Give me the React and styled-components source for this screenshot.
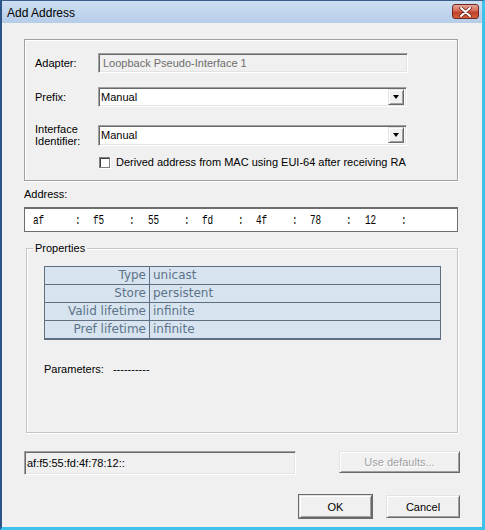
import React from "react";
import styled, { createGlobalStyle } from "styled-components";

const GlobalStyle = createGlobalStyle`
  html, body {
    margin: 0;
    padding: 0;
    background: #f0f0f0;
  }
  body {
    font-family: "Liberation Sans", Arial, sans-serif;
    font-size: 11px;
    color: #000;
  }
`;

const Window = styled.div`
  width: 485px;
  height: 530px;
  box-sizing: border-box;
  display: flex;
  flex-direction: column;
  background: #f0f0f0;
  border-left: 2px solid #2a5586;
  border-right: 3px solid #3fc2ea;
  border-bottom: 3px solid #3fc2ea;
  border-top: 1px solid #3a5f8c;
  overflow: hidden;
`;

const TitleBar = styled.div`
  height: 22px;
  flex: none;
  display: flex;
  align-items: center;
  justify-content: space-between;
  padding: 0 3px 0 5px;
  background: linear-gradient(#cddff2, #b6cde8);
`;

const Title = styled.div`
  font-size: 12px;
  color: #000;
  padding-top: 1px;
`;

const CloseButton = styled.div`
  width: 27px;
  height: 15px;
  box-sizing: border-box;
  border: 1px solid #6e2a22;
  border-radius: 3px;
  background: linear-gradient(#e6a796 0%, #d56a53 45%, #c0412a 55%, #d4603f 100%);
  display: flex;
  align-items: center;
  justify-content: center;
  margin-top: -1px;
`;

const Body = styled.div`
  flex: 1;
  padding: 16px 23px 0 22px;
  display: flex;
  flex-direction: column;
`;

const GroupBox = styled.div`
  width: 434px;
  height: 142px;
  box-sizing: border-box;
  border: 1px solid #a0a0a0;
  box-shadow: 1px 1px 0 #fff, inset 1px 1px 0 #fff;
  padding: 13px 0 0 10px;
  display: flex;
  flex-direction: column;
`;

const FieldRow = styled.div`
  display: grid;
  grid-template-columns: 63px 310px;
  align-items: center;
  margin-top: ${(p) => p.$gap || 0}px;
  height: ${(p) => p.$h || 20}px;
`;

const Label = styled.div`
  line-height: 12px;
`;

const SunkenField = styled.div`
  box-sizing: border-box;
  height: ${(p) => p.$h || 20}px;
  width: ${(p) => p.$w || 310}px;
  background: ${(p) => (p.$disabled ? "#f0f0f0" : "#fff")};
  border-top: 1px solid #a0a0a0;
  border-left: 1px solid #a0a0a0;
  border-right: 1px solid #fff;
  border-bottom: 1px solid #fff;
  box-shadow: inset 1px 1px 0 #696969, inset -1px -1px 0 #e3e3e3;
  display: flex;
  align-items: center;
  padding-left: ${(p) => p.$pad ?? 4}px;
  color: ${(p) => (p.$disabled && !p.$dark ? "#6d6d6d" : "#000")};
`;

const SelectBox = styled(SunkenField)`
  justify-content: space-between;
  padding-right: 2px;
`;

const DropButton = styled.div`
  width: 16px;
  height: 16px;
  box-sizing: border-box;
  background: #f0f0f0;
  border-top: 1px solid #e3e3e3;
  border-left: 1px solid #e3e3e3;
  border-right: 1px solid #696969;
  border-bottom: 1px solid #696969;
  box-shadow: inset 1px 1px 0 #fff, inset -1px -1px 0 #a0a0a0;
  display: flex;
  align-items: center;
  justify-content: center;
`;

const Arrow = styled.div`
  width: 0;
  height: 0;
  border-left: 3.5px solid transparent;
  border-right: 3.5px solid transparent;
  border-top: 4px solid #000;
`;

const CheckRow = styled.label`
  display: flex;
  align-items: center;
  gap: 6px;
  margin: 12px 0 0 64px;
`;

const CheckBox = styled.span`
  width: 11px;
  height: 11px;
  box-sizing: border-box;
  background: #fff;
  border: 1px solid #808080;
  box-shadow: inset 1px 1px 0 #404040, 1px 1px 0 #fff;
`;

const SectionLabel = styled.div`
  margin-top: 7px;
  line-height: 13px;
`;

const AddressField = styled.div`
  margin-top: 6px;
  width: 434px;
  height: 25px;
  box-sizing: border-box;
  background: #fff;
  border: 1px solid #6e6e6e;
  border-top-width: 2px;
  display: grid;
  grid-template-columns: repeat(8, 54.3px);
  align-items: center;
  padding-left: 14px;
  font-family: "Liberation Mono", "DejaVu Sans Mono", monospace;
  font-size: 13px;
`;

const Octet = styled.div`
  display: grid;
  grid-template-columns: 36px 18px;
  span {
    display: inline-block;
    transform: scaleX(0.72);
    transform-origin: left;
  }
  &:first-child span:first-child {
    margin-left: -6px;
  }
`;

const Fieldset = styled.fieldset`
  margin: 10px 0 0 2px;
  width: 432px;
  height: 191px;
  box-sizing: border-box;
  padding: 0;
  border: 1px solid #c4c4c4;
  box-shadow: 1px 1px 0 #fff, inset 1px 1px 0 #fff;
  legend {
    margin-left: 6px;
    padding: 0 2px;
    line-height: 13px;
  }
`;

const FieldsetInner = styled.div`
  padding: 0 0 0 17px;
`;

const PropTable = styled.table`
  margin-top: 11px;
  width: 397px;
  border-collapse: collapse;
  border: 1px solid #5d6f80;
  border-bottom-width: 2px;
  font-family: "DejaVu Sans", Verdana, sans-serif;
  font-size: 12px;
  color: #5d7389;
  td {
    background: #d7e4f0;
    border: 1px solid #5d6f80;
    height: 17px;
    padding: 0 3px;
    line-height: 17px;
  }
  td:first-child {
    width: 98px;
    text-align: right;
  }
`;

const Params = styled.div`
  margin-top: 23px;
  display: flex;
  gap: 9px;
`;

const BottomRow = styled.div`
  margin-top: 18px;
  display: flex;
  justify-content: space-between;
  width: 436px;
`;

const Button = styled.div`
  box-sizing: border-box;
  width: ${(p) => p.$w}px;
  height: ${(p) => p.$h || 23}px;
  background: #f0f0f0;
  border-top: 1px solid #e3e3e3;
  border-left: 1px solid #e3e3e3;
  border-right: 1px solid #696969;
  border-bottom: 1px solid #696969;
  box-shadow: inset 1px 1px 0 #fff, inset -1px -1px 0 #a0a0a0;
  display: flex;
  align-items: center;
  justify-content: center;
  color: ${(p) => (p.$disabled ? "#a0a0a0" : "#000")};
  text-shadow: ${(p) => (p.$disabled ? "1px 1px 0 #fff" : "none")};
`;

const DefaultButton = styled(Button)`
  outline: 1px solid #696969;
  outline-offset: 0;
`;

const ButtonRow = styled.div`
  margin-top: 20px;
  display: flex;
  justify-content: flex-end;
  gap: 14px;
  width: 436px;
`;

const octets = ["af", "f5", "55", "fd", "4f", "78", "12", ""];

const props = [
  ["Type", "unicast"],
  ["Store", "persistent"],
  ["Valid lifetime", "infinite"],
  ["Pref lifetime", "infinite"],
];

export default function App() {
  return (
    <>
      <GlobalStyle />
      <Window>
        <TitleBar>
          <Title>Add Address</Title>
          <CloseButton>
            <svg width="13" height="10" viewBox="0 0 13 10">
              <path
                d="M2 1 L11 9 M11 1 L2 9"
                stroke="#5a2018"
                strokeWidth="3.4"
                strokeLinecap="round"
              />
              <path
                d="M2 1 L11 9 M11 1 L2 9"
                stroke="#fff"
                strokeWidth="2"
                strokeLinecap="round"
              />
            </svg>
          </CloseButton>
        </TitleBar>
        <Body>
          <GroupBox>
            <FieldRow>
              <Label>Adapter:</Label>
              <SunkenField $disabled>Loopback Pseudo-Interface 1</SunkenField>
            </FieldRow>
            <FieldRow $gap={14}>
              <Label>Prefix:</Label>
              <SelectBox $w={309} $pad={2}>
                Manual
                <DropButton>
                  <Arrow />
                </DropButton>
              </SelectBox>
            </FieldRow>
            <FieldRow $gap={16} $h={21}>
              <Label>
                Interface
                <br />
                Identifier:
              </Label>
              <SelectBox $w={309} $h={21} $pad={2}>
                Manual
                <DropButton>
                  <Arrow />
                </DropButton>
              </SelectBox>
            </FieldRow>
            <CheckRow>
              <CheckBox />
              Derived address from MAC using EUI-64 after receiving RA
            </CheckRow>
          </GroupBox>

          <SectionLabel>Address:</SectionLabel>
          <AddressField>
            {octets.map((o, i) => (
              <Octet key={i}>
                <span>{o}</span>
                <span>{i < 7 ? ":" : ""}</span>
              </Octet>
            ))}
          </AddressField>

          <Fieldset>
            <legend>Properties</legend>
            <FieldsetInner>
              <PropTable>
                <tbody>
                  {props.map(([k, v]) => (
                    <tr key={k}>
                      <td>{k}</td>
                      <td>{v}</td>
                    </tr>
                  ))}
                </tbody>
              </PropTable>
              <Params>
                <span>Parameters:</span>
                <span>----------</span>
              </Params>
            </FieldsetInner>
          </Fieldset>

          <BottomRow>
            <SunkenField $w={272} $h={24} $disabled $dark $pad={2}>
              af:f5:55:fd:4f:78:12::
            </SunkenField>
            <Button $w={121} $h={22} $disabled>
              Use defaults...
            </Button>
          </BottomRow>

          <ButtonRow>
            <DefaultButton $w={73}>OK</DefaultButton>
            <Button $w={74}>Cancel</Button>
          </ButtonRow>
        </Body>
      </Window>
    </>
  );
}
